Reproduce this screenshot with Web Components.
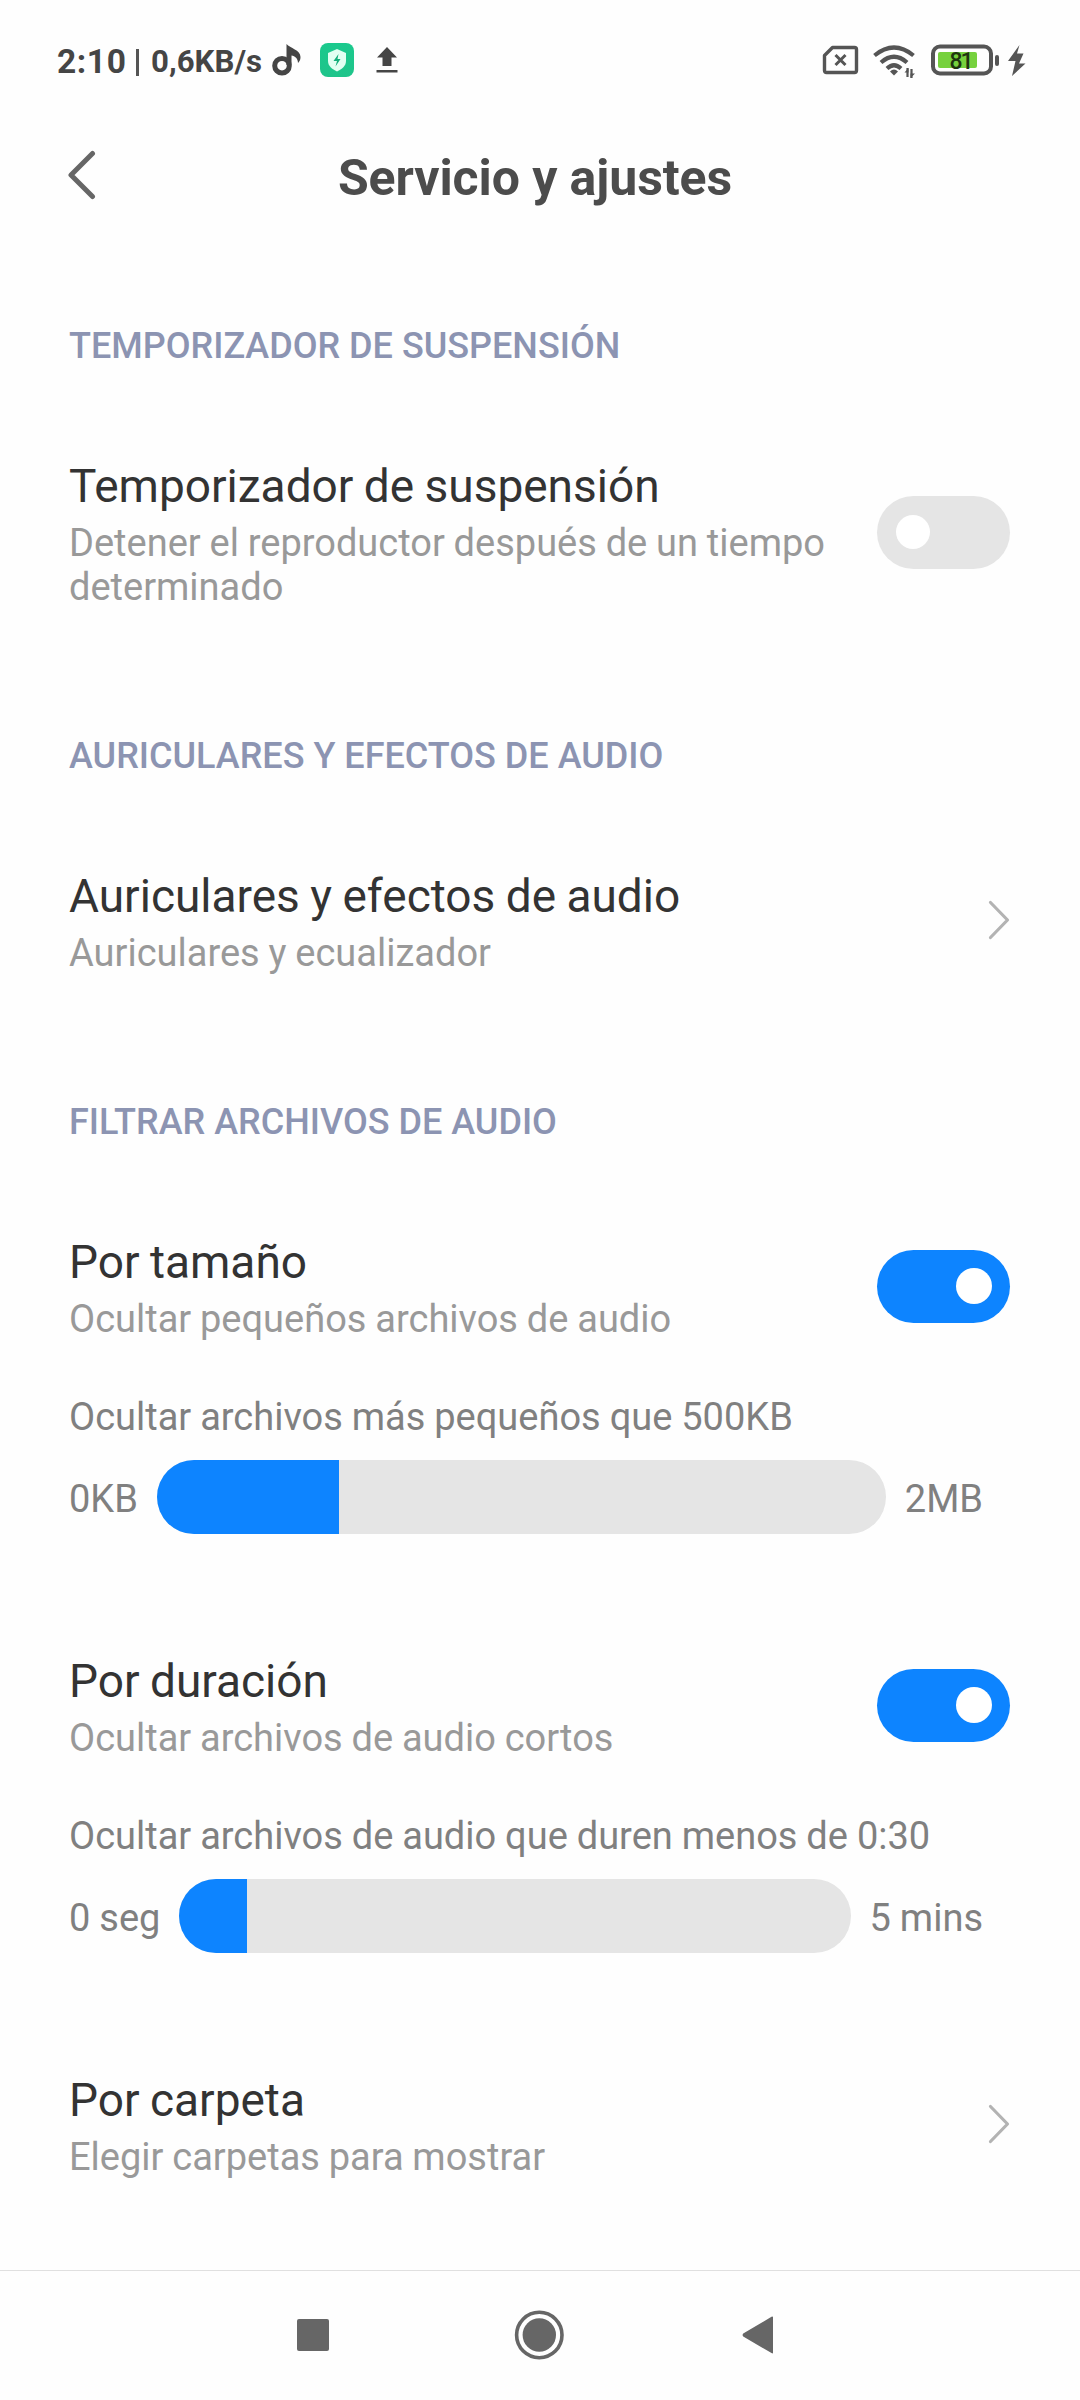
<!DOCTYPE html>
<html lang="es">
<head>
<meta charset="utf-8">
<title>Servicio y ajustes</title>
<style>
html,body{margin:0;padding:0}
body{background:#fefefe;font-family:Roboto,"Liberation Sans",sans-serif}
</style>
</head>
<body>
<settings-screen></settings-screen>
<script>
const define = (name, html) => {
  const t = document.createElement('template');
  t.innerHTML = html;
  customElements.define(name, class extends HTMLElement {
    constructor() {
      super();
      this.attachShadow({ mode: 'open' }).appendChild(t.content.cloneNode(true));
    }
  });
};

define('status-bar', `
<style>
:host{display:flex;justify-content:space-between;height:120px;padding:0 54px 0 57px;box-sizing:border-box;color:#454545}
.side{display:flex;height:120px;align-items:center}
.time{font-weight:700;font-size:33.5px;line-height:40px;letter-spacing:.6px;width:79px;padding-top:3px}
.bar{width:3px;height:27px;background:#555;margin:4px 12px 0 0}
.net{font-weight:700;font-size:31.2px;line-height:40px;letter-spacing:.05px;width:121px;padding-top:4px}
.time,.net{white-space:nowrap}
svg{display:block;flex:none}
.bat text{font:500 23px Roboto,sans-serif}
</style>
<div class="side">
 <span class="time">2:10</span><span class="bar"></span><span class="net">0,6KB/s</span>
 <svg width="30" height="32" viewBox="0 0 30 32"><circle cx="10" cy="21.700" r="7.300" fill="none" stroke="#454545" stroke-width="5"/><path d="M14.500 0C18 4 28.500 6 28.500 13C28.500 16 27.500 17.500 26 19C26 14.500 23 12 19.500 11.500V21H14.500Z" fill="#454545"/></svg>
 <svg width="34" height="34" viewBox="0 0 34 34" style="margin-left:17.500px"><defs><linearGradient id="g" x2="0" y2="1"><stop stop-color="#1ac98d"/><stop offset="1" stop-color="#1fc48a"/></linearGradient></defs><rect width="34" height="34" rx="8" fill="url(#g)"/><path d="M17 6L26 10V18C26 23 22 26 17 28.500C12 26 8 23 8 18V10Z" fill="#e2fff2"/><path d="M18.500 11L13.500 18H17L15.500 23.500L20.500 16H17.500Z" fill="#13ae7a"/></svg>
 <svg width="22" height="26" viewBox="0 0 22 26" style="margin-left:22.500px"><path d="M11 0L21 10.500H15.500V19H6.500V10.500H1ZM.500 23H21.500V25.500H.500Z" fill="#454545"/></svg>
</div>
<div class="side">
 <svg width="37" height="30" viewBox="0 0 37 30"><path d="M10.500 2.500H32.500Q34.500 2.500 34.500 4.500V25.500Q34.500 27.500 32.500 27.500H4.500Q2.500 27.500 2.500 25.500V10.500Z" fill="none" stroke="#555" stroke-width="3.400" stroke-linejoin="round"/><path d="M13.500 10L23.500 20M23.500 10L13.500 20" stroke="#555" stroke-width="3"/></svg>
 <svg width="44" height="33" viewBox="0 0 44 33" style="margin:3px 0 0 14px"><g fill="none" stroke="#555" stroke-width="4.200"><path d="M1.500 10.500Q21 -5.500 40.500 10.500"/><path d="M8 17.500Q21 6 34 17.500"/><path d="M14 23.500Q21 17 28 23.500"/></g><path d="M17 26.500Q21 22.500 25 26.500L21 30.500Z" fill="#555"/><path d="M34.500 23V32M38.500 24V33" stroke="#555" stroke-width="2.200"/><path d="M31.500 27.500L35.500 23V27.500ZM37.500 28.500H42L37.500 33Z" fill="#555"/></svg>
 <svg class="bat" width="70" height="32" viewBox="0 0 70 32" style="margin:0 0 0 14px"><rect x="2" y="2.500" width="58" height="27" rx="7" fill="none" stroke="#555" stroke-width="4"/><rect x="7" y="8" width="39" height="16" rx="2" fill="#76d13d"/><text x="18.500" y="25" textLength="24" fill="#203410">81</text><path d="M66 13V20" stroke="#555" stroke-width="4" stroke-linecap="round"/></svg>
 <svg width="19" height="31" viewBox="0 0 19 31" style="margin-left:6px"><path d="M12.500 0L1 16H8.500L5 31L18.500 18.500H12L16.500 8.500H10Z" fill="#555"/></svg>
</div>`);

define('title-bar', `
<style>
:host{display:grid;grid-template-columns:30px 1fr 30px;align-items:center;height:110px;padding:0 77px 0 67px}
h1{margin:6px 0 0;text-align:center;font-size:50px;line-height:60px;font-weight:700;color:#4c4c4c;letter-spacing:-.08px}
svg{display:block}
</style>
<svg width="30" height="50" viewBox="0 0 30 50"><path d="M25.500 3.500L4 25L25.500 46.500" fill="none" stroke="#666" stroke-width="5" stroke-linecap="round" stroke-linejoin="round"/></svg>
<h1><slot></slot></h1>`);

define('section-heading', `
<style>
:host{display:block;margin:126px 0 88px;font-size:36px;line-height:42px;font-weight:500;color:#8c94b2;white-space:nowrap}
</style><slot></slot>`);

define('setting-row', `
<style>
:host{display:flex;align-items:center;justify-content:space-between}
.text{padding-top:4px;flex:1}
.title{font-size:46px;line-height:54px;color:#333;word-spacing:-1px}
.sub{margin-top:8px;font-size:38px;line-height:44px;color:#999;max-width:790px;word-spacing:-.6px}
</style>
<div class="text"><div class="title"><slot name="title"></slot></div><div class="sub"><slot></slot></div></div>
<slot name="control"></slot>`);

define('toggle-switch', `
<style>
:host{display:flex;align-items:center;box-sizing:border-box;width:133px;height:73px;border-radius:37px;padding:0 19px;background:#e5e5e5;flex:none}
:host([on]){background:#0d84ff;justify-content:flex-end;padding-right:18px}
i{display:block;width:34px;height:34px;border-radius:50%;background:#fff}
:host([on]) i{width:36px;height:36px}
</style><i></i>`);

define('chevron-right', `
<style>:host{display:block;flex:none;margin-right:-.6px}svg{display:block}</style>
<svg width="24" height="40" viewBox="0 0 24 40"><path d="M3.500 2.500L20.500 20L3.500 37.500" fill="none" stroke="#b3b3b3" stroke-width="3.200" stroke-linecap="round" stroke-linejoin="round"/></svg>`);

define('range-slider', `
<style>
:host{display:block;margin:54px 27.4px 116px 0;font-size:38px;line-height:44px;color:#808080;word-spacing:-.5px}
.row{display:flex;align-items:center;gap:19px;margin-top:21px;height:74px;white-space:nowrap}
.row span{padding-top:4px}
.track{flex:1;height:74px;border-radius:37px;background:#e5e5e5;overflow:hidden}
.fill{height:74px;width:var(--value);background:#0d84ff}
</style>
<div><slot></slot></div>
<div class="row"><span><slot name="min"></slot></span><div class="track"><div class="fill"></div></div><span><slot name="max"></slot></span></div>`);

define('nav-bar', `
<style>
:host{display:flex;box-sizing:border-box;height:130px;border-top:1px solid #e0e0e0;align-items:center;padding:0 0 1px 297px}
svg{display:block}
</style>
<svg width="32" height="32"><rect width="32" height="32" rx="2" fill="#666"/></svg>
<svg width="50" height="50" viewBox="0 0 50 50" style="margin-left:185px"><circle cx="25.300" cy="25" r="22.700" fill="none" stroke="#666" stroke-width="3.600"/><circle cx="25.300" cy="25" r="16.700" fill="#666"/></svg>
<svg width="32" height="38" viewBox="0 0 32 38" style="margin-left:178px"><path d="M29.500 .800Q31 0 31 1.500V36.500Q31 38 29.500 37L1.200 20.500Q0 19 1.200 17.500Z" fill="#666"/></svg>`);

define('settings-screen', `
<style>
:host{display:flex;flex-direction:column;width:1080px;height:2400px;overflow:hidden}
main{flex:1;padding:0 69.6px 0 69px;margin-top:-31px}
</style>
<status-bar></status-bar>
<title-bar>Servicio y ajustes</title-bar>
<main>
 <section-heading>TEMPORIZADOR DE SUSPENSIÓN</section-heading>
 <setting-row><span slot="title">Temporizador de suspensión</span>Detener el reproductor después de un tiempo determinado<toggle-switch slot="control"></toggle-switch></setting-row>
 <section-heading>AURICULARES Y EFECTOS DE AUDIO</section-heading>
 <setting-row><span slot="title">Auriculares y efectos de audio</span>Auriculares y ecualizador<chevron-right slot="control"></chevron-right></setting-row>
 <section-heading>FILTRAR ARCHIVOS DE AUDIO</section-heading>
 <setting-row><span slot="title">Por tamaño</span>Ocultar pequeños archivos de audio<toggle-switch slot="control" on></toggle-switch></setting-row>
 <range-slider style="--value:25%">Ocultar archivos más pequeños que 500KB<span slot="min">0KB</span><span slot="max">2MB</span></range-slider>
 <setting-row><span slot="title">Por duración</span>Ocultar archivos de audio cortos<toggle-switch slot="control" on></toggle-switch></setting-row>
 <range-slider style="--value:10%">Ocultar archivos de audio que duren menos de 0:30<span slot="min">0 seg</span><span slot="max">5 mins</span></range-slider>
 <setting-row><span slot="title">Por carpeta</span>Elegir carpetas para mostrar<chevron-right slot="control"></chevron-right></setting-row>
</main>
<nav-bar></nav-bar>`);
</script>
</body>
</html>
